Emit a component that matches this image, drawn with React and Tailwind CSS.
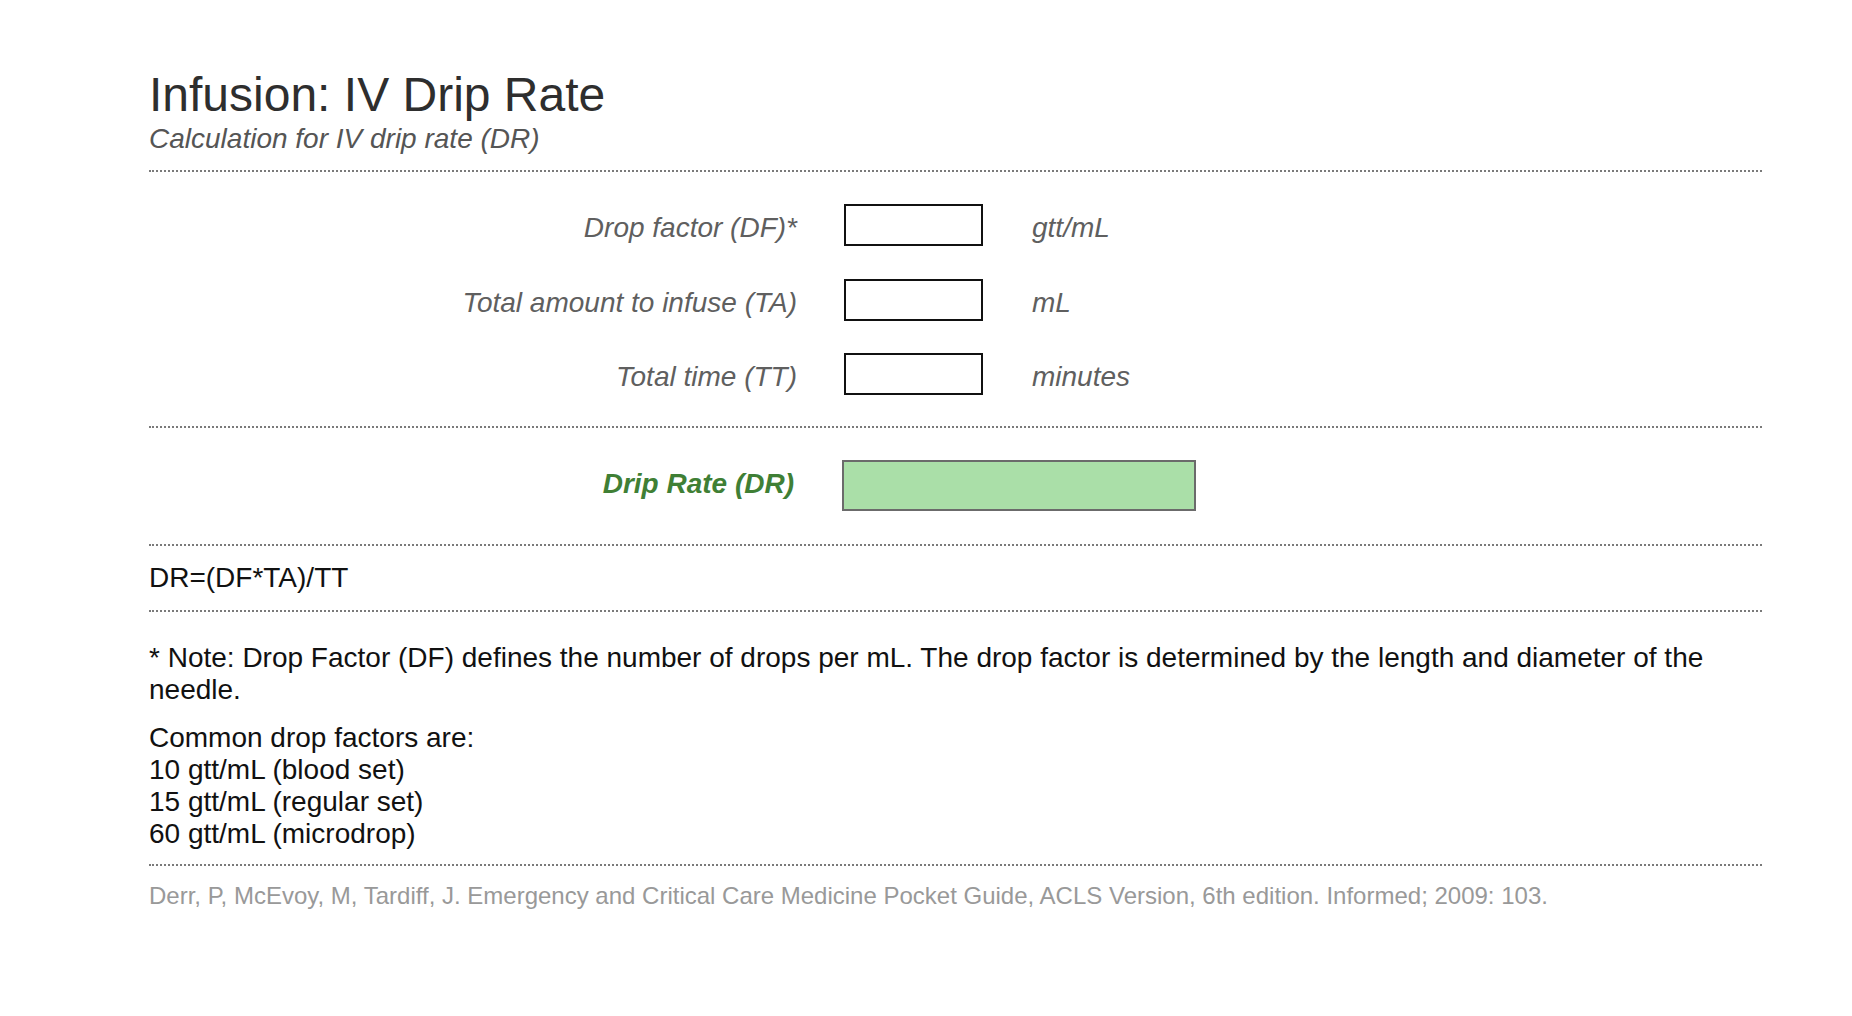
import React from "react";

const font = { fontFamily: '"Liberation Sans", Arial, Helvetica, sans-serif' };

function Row({ label, unit }) {
  return (
    <div className="flex items-start h-[42px]">
      <div className="w-[648px] shrink-0 pt-[8px] text-right italic text-[28px] leading-[32px] text-[#5f5f5f]">
        {label}
      </div>
      <input
        type="text"
        className="ml-[47px] w-[139px] h-[42px] border-2 border-[#111] bg-white outline-none"
      />
      <div className="ml-[49px] pt-[8px] italic text-[28px] leading-[32px] text-[#5f5f5f]">
        {unit}
      </div>
    </div>
  );
}

function Dotted({ className = "" }) {
  return <div className={"w-full border-t-2 border-dotted border-[#7a7a7a] " + className} />;
}

export default function App() {
  return (
    <div className="min-h-[1016px] bg-white" style={font}>
      <div className="ml-[149px] w-[1613px] pt-[71px]">
        <h1 className="text-[48px] leading-[48px] text-[#2e2e2e] font-normal">
          Infusion: IV Drip Rate
        </h1>
        <div className="mt-[4px] italic text-[28px] leading-[32px] text-[#555555]">
          Calculation for IV drip rate (DR)
        </div>
        <Dotted className="mt-[15px]" />
        <div className="mt-[32px] flex flex-col gap-[32.5px]">
          <Row label="Drop factor (DF)*" unit="gtt/mL" />
          <Row label="Total amount to infuse (TA)" unit="mL" />
          <Row label="Total time (TT)" unit="minutes" />
        </div>
        <Dotted className="mt-[31px]" />
        <div className="mt-[32px] flex items-start h-[51px]">
          <div className="w-[648px] shrink-0 pt-[8px] pr-[3px] text-right italic font-bold text-[28px] leading-[32px] text-[#3f7f35]">
            Drip Rate (DR)
          </div>
          <div className="ml-[45px] w-[354px] h-[51px] border-2 border-[#6b6b6b] bg-[#aadfa8]" />
        </div>
        <Dotted className="mt-[33px]" />
        <div className="mt-[16px] text-[28px] leading-[32px] text-[#111]">DR=(DF*TA)/TT</div>
        <Dotted className="mt-[16px]" />
        <p className="mt-[30px] text-[28px] leading-[32px] text-[#111]">
          * Note: Drop Factor (DF) defines the number of drops per mL. The drop factor is
          determined by the length and diameter of the needle.
        </p>
        <div className="mt-[16px] text-[28px] leading-[32px] text-[#111]">
          <div>Common drop factors are:</div>
          <div>10 gtt/mL (blood set)</div>
          <div>15 gtt/mL (regular set)</div>
          <div>60 gtt/mL (microdrop)</div>
        </div>
        <Dotted className="mt-[14px]" />
        <div className="mt-[14px] text-[24px] leading-[32px] text-[#999999]">
          Derr, P, McEvoy, M, Tardiff, J. Emergency and Critical Care Medicine Pocket Guide,
          ACLS Version, 6th edition. Informed; 2009: 103.
        </div>
      </div>
    </div>
  );
}
